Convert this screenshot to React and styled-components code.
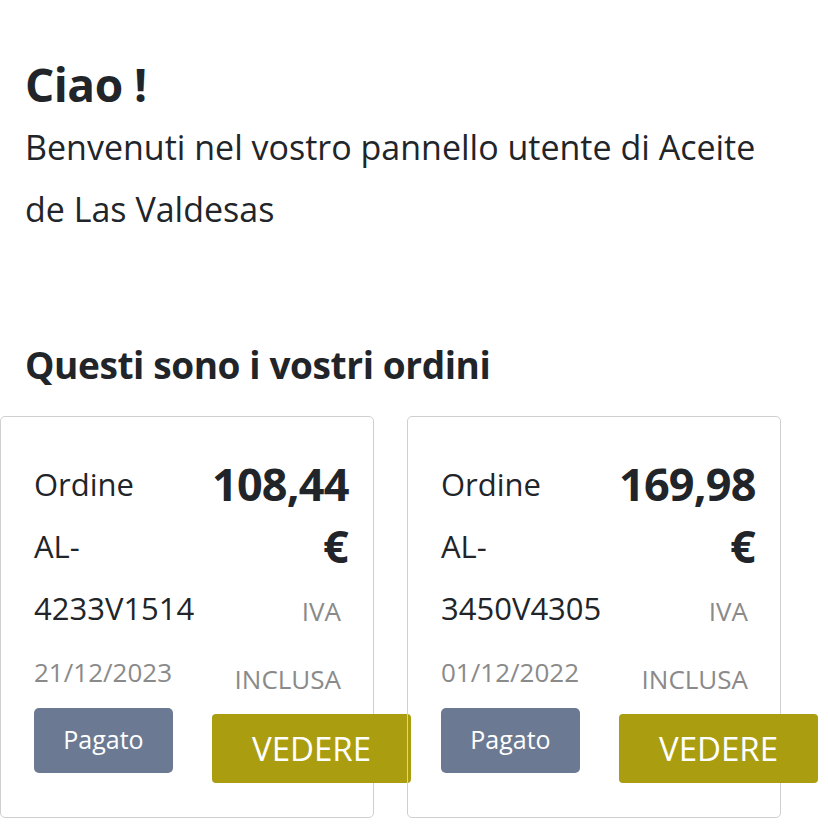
import React from "react";
import styled, { createGlobalStyle } from "styled-components";

const orders = [
  { code: "AL-4233V1514", date: "21/12/2023", total: "108,44", status: "Pagato" },
  { code: "AL-3450V4305", date: "01/12/2022", total: "169,98", status: "Pagato" },
];

const GlobalStyle = createGlobalStyle`
  html, body {
    margin: 0;
    padding: 0;
    background: #ffffff;
  }
  body {
    font-family: "Open Sans", "Noto Sans", sans-serif;
    color: #212529;
  }
`;

const Page = styled.div`
  width: 828px;
  min-height: 824px;
  overflow: hidden;
`;

const Intro = styled.section`
  padding: 52px 25px 0;
`;

const Greeting = styled.h1`
  margin: 0;
  font-size: 46px;
  font-weight: 700;
  line-height: 64px;
  letter-spacing: -0.5px;
`;

const Welcome = styled.p`
  margin: 0;
  font-size: 34px;
  line-height: 62px;
  width: 745px;
`;

const SectionTitle = styled.h2`
  margin: 100px 0 0;
  padding: 0 25px;
  font-size: 37px;
  font-weight: 700;
  line-height: 50px;
  letter-spacing: -0.4px;
`;

const Cards = styled.div`
  display: flex;
  gap: 33px;
  margin-top: 26px;
`;

const Card = styled.article`
  box-sizing: border-box;
  width: 374px;
  height: 402px;
  border: 1px solid #cfcfcf;
  border-radius: 5px;
  padding: 36px 0 0 33px;
  display: grid;
  grid-template-columns: 178px 136px;
  grid-template-rows: 255px auto;
  align-content: start;
`;

const Info = styled.div`
  font-size: 31px;
  line-height: 62px;
`;

const OrderCode = styled.div`
  width: 176px;
`;

const OrderDate = styled.div`
  color: #8a8a8a;
  font-size: 26px;
  line-height: 66px;
`;

const Price = styled.div`
  text-align: right;
`;

const Amount = styled.div`
  font-size: 45px;
  font-weight: 700;
  line-height: 62px;
  letter-spacing: -0.8px;
`;

const Tax = styled.div`
  color: #8a8a8a;
  font-size: 26px;
  line-height: 68px;
  padding-right: 7px;
`;

const Badge = styled.span`
  box-sizing: border-box;
  width: 139px;
  height: 65px;
  display: flex;
  align-items: center;
  justify-content: center;
  padding-bottom: 4px;
  background: #6b7a92;
  color: #ffffff;
  border-radius: 5px;
  font-size: 25px;
`;

const ViewButton = styled.button`
  box-sizing: border-box;
  display: block;
  width: 199px;
  height: 69px;
  margin-top: 6px;
  border: none;
  border-radius: 4px;
  background: #aa9e10;
  color: #ffffff;
  font-family: inherit;
  font-size: 33px;
  text-transform: uppercase;
  cursor: pointer;
`;

export default function App() {
  return (
    <Page>
      <GlobalStyle />
      <Intro>
        <Greeting>Ciao !</Greeting>
        <Welcome>Benvenuti nel vostro pannello utente di Aceite de Las Valdesas</Welcome>
      </Intro>
      <SectionTitle>Questi sono i vostri ordini</SectionTitle>
      <Cards>
        {orders.map((o) => (
          <Card key={o.code}>
            <Info>
              <div>Ordine</div>
              <OrderCode>{o.code}</OrderCode>
              <OrderDate>{o.date}</OrderDate>
            </Info>
            <Price>
              <Amount>
                {o.total}
                <br />€
              </Amount>
              <Tax>
                IVA
                <br />
                INCLUSA
              </Tax>
            </Price>
            <div>
              <Badge>{o.status}</Badge>
            </div>
            <div>
              <ViewButton>Vedere</ViewButton>
            </div>
          </Card>
        ))}
      </Cards>
    </Page>
  );
}
